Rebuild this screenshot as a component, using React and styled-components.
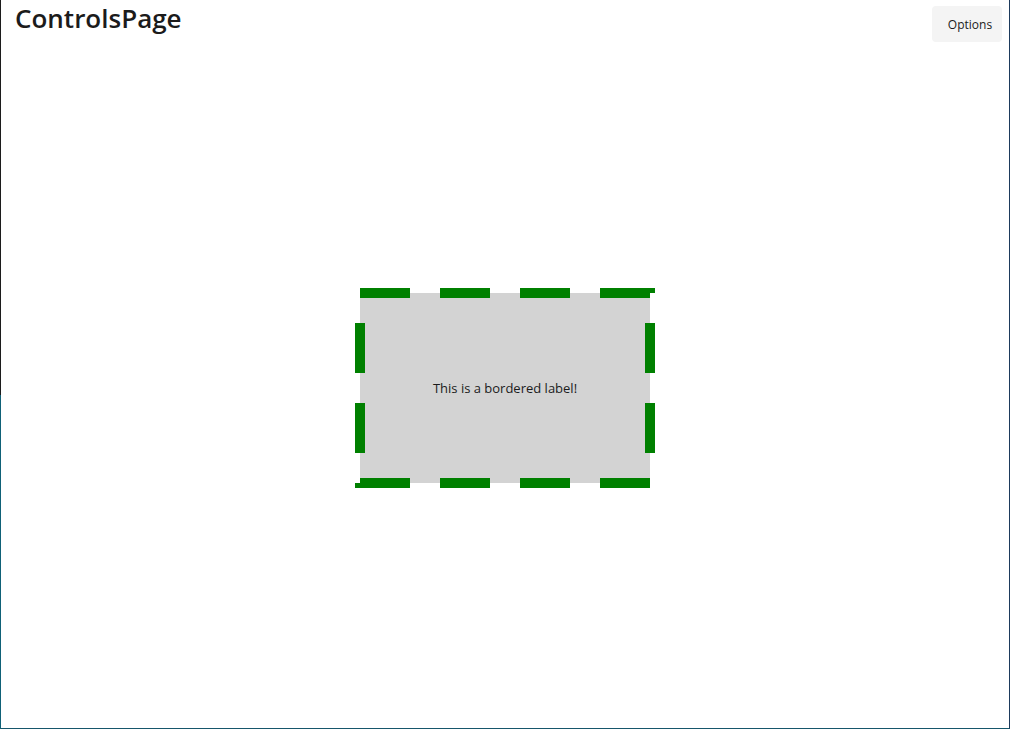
import React from 'react';
import styled, { createGlobalStyle } from 'styled-components';

const GlobalStyle = createGlobalStyle`
  html, body {
    margin: 0;
    padding: 0;
    background: #ffffff;
  }
  body {
    font-family: "Open Sans", "Noto Sans", sans-serif;
  }
`;

const Window = styled.div`
  box-sizing: border-box;
  width: 1010px;
  height: 729px;
  display: flex;
  flex-direction: column;
  background: #ffffff;
  border-right: 1px solid #1d3a5c;
  border-bottom: 1px solid #16566b;
  border-left: 1px solid transparent;
  position: relative;
  &::before {
    content: '';
    position: absolute;
    left: -1px;
    top: 0;
    bottom: -1px;
    width: 1px;
    background: linear-gradient(#1c1c1c 0, #1c1c1c 395px, #0f6177 395px);
  }
`;

const TitleBar = styled.header`
  height: 48px;
  display: flex;
  align-items: flex-start;
  justify-content: space-between;
  padding: 0 7px 0 14px;
`;

const Title = styled.h1`
  margin: 0;
  font-family: "Open Sans", sans-serif;
  font-weight: 600;
  font-size: 26px;
  line-height: 36px;
  color: #1b1b1b;
`;

const ToolButton = styled.button`
  margin-top: 6px;
  width: 70px;
  height: 36px;
  border: none;
  border-radius: 4px;
  background: #f4f4f4;
  color: #1b1b1b;
  font-family: "Open Sans", sans-serif;
  font-size: 12px;
  padding: 0 0 0 6px;
`;

const Content = styled.main`
  flex: 1;
  display: flex;
  align-items: center;
  justify-content: center;
`;

const BorderedLabel = styled.div`
  position: relative;
  width: ${({ w }) => w}px;
  height: ${({ h }) => h}px;
  background: #d3d3d3;
  display: flex;
  align-items: center;
  justify-content: center;
  font-family: "Open Sans", sans-serif;
  font-size: 13px;
  color: #1b1b1b;
`;

const DashFrame = styled.svg`
  position: absolute;
  left: -5px;
  top: -5px;
  overflow: visible;
  pointer-events: none;
`;

const LabelBox = ({ w, h, children }) => (
  <BorderedLabel w={w} h={h}>
    {children}
    <DashFrame width={w + 10} height={h + 10}>
      <g fill="#008000">
        {/* little corner nubs the dash pattern leaves behind */}
        <rect x={w + 5} y={0} width={5} height={5} />
        <rect x={0} y={h + 5} width={5} height={5} />
      </g>
      <path
        d={`M5 5 H${w + 5} V${h + 5} H5 Z`}
        fill="none"
        stroke="#008000"
        strokeWidth="10"
        strokeDasharray="50 30"
        strokeLinejoin="miter"
      />
    </DashFrame>
  </BorderedLabel>
);

export default function App() {
  return (
    <>
      <GlobalStyle />
      <Window>
        <TitleBar>
          <Title>ControlsPage</Title>
          <ToolButton>Options</ToolButton>
        </TitleBar>
        <Content>
          <LabelBox w={290} h={190}>This is a bordered label!</LabelBox>
        </Content>
      </Window>
    </>
  );
}
